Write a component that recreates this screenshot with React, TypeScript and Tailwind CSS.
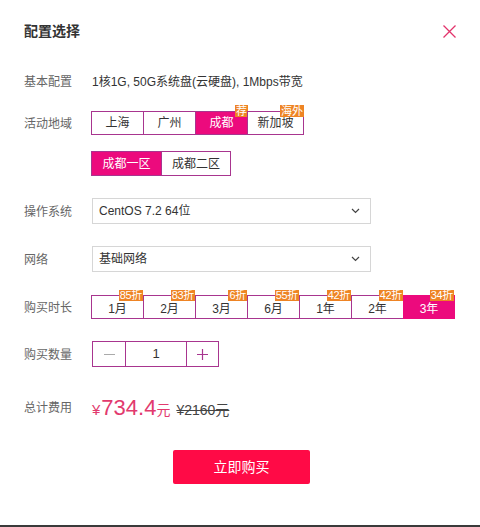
import { useState } from "react";

const regions = [
  { name: "上海", w: "w-[52px]" },
  { name: "广州", w: "w-[52px]" },
  { name: "成都", w: "w-[52px]", tag: "荐" },
  { name: "新加坡", w: "w-[57px]", tag: "海外" },
];

const zones = ["成都一区", "成都二区"];

const durations = [
  { name: "1月", off: "85折" },
  { name: "2月", off: "83折" },
  { name: "3月", off: "6折" },
  { name: "6月", off: "55折" },
  { name: "1年", off: "42折" },
  { name: "2年", off: "42折" },
  { name: "3年", off: "34折" },
];

function Chevron() {
  return (
    <svg width="9" height="6" viewBox="0 0 9 6" fill="none" aria-hidden="true">
      <path d="M1 1l3.5 3.5L8 1" stroke="#444" strokeWidth="1.2" />
    </svg>
  );
}

function Label({ children }: { children: React.ReactNode }) {
  return <span className="w-[68px] shrink-0 text-[12px] text-[#666] pt-px">{children}</span>;
}

export default function App() {
  const [region, setRegion] = useState(2);
  const [zone, setZone] = useState(0);
  const [dur, setDur] = useState(6);
  const [qty, setQty] = useState(1);

  return (
    <div
      className="h-[527px] flex flex-col bg-white text-[#333]"
      style={{ fontFamily: '"Liberation Sans", "Noto Sans CJK SC", sans-serif' }}
    >
      {/* Header */}
      <div className="flex items-center justify-between pl-6 pr-[24px] pt-[21px] h-[41px]">
        <h1 className="text-[14px] font-bold leading-5 text-[#333]">配置选择</h1>
        <svg width="13" height="13" viewBox="0 0 13 13" aria-hidden="true">
          <path d="M0.5 0.5l12 12M12.5 0.5l-12 12" stroke="#e2336b" strokeWidth="1.3" />
        </svg>
      </div>

      <div className="flex flex-col px-6">
        {/* Basic */}
        <div className="flex items-center h-6 mt-[28px]">
          <Label>基本配置</Label>
          <span className="text-[12px] text-[#333] pt-px">1核1G, 50G系统盘(云硬盘), 1Mbps带宽</span>
        </div>

        {/* Region */}
        <div className="flex items-center h-6 mt-[18px]">
          <Label>活动地域</Label>
          <div className="flex h-6 -ml-px">
            {regions.map((r, i) => (
              <button
                key={r.name}
                onClick={() => setRegion(i)}
                className={`relative ${r.w} h-6 border-y border-l border-[#a8358f] text-[12px] ${
                  i === regions.length - 1 ? "border-r" : ""
                } ${region === i ? "bg-[#ec0a7d] text-white" : "bg-white text-[#333]"}`}
              >
                {r.name}
                {r.tag && (
                  <span className="absolute right-[-1px] top-[-7px] h-[12px] px-px bg-[#ee8424] text-white text-[11px] leading-[12px]">
                    {r.tag}
                  </span>
                )}
              </button>
            ))}
          </div>
        </div>

        {/* Zone */}
        <div className="flex items-center h-[25px] mt-[16px]">
          <span className="w-[68px] shrink-0" />
          <div className="flex h-[25px] -ml-px">
            {zones.map((z, i) => (
              <button
                key={z}
                onClick={() => setZone(i)}
                className={`w-[70px] h-[25px] border-y border-l border-[#a8358f] text-[12px] ${
                  i === zones.length - 1 ? "border-r" : ""
                } ${zone === i ? "bg-[#ec0a7d] text-white" : "bg-white text-[#333]"}`}
              >
                {z}
              </button>
            ))}
          </div>
        </div>

        {/* OS */}
        <div className="flex items-center h-[26px] mt-[22px]">
          <Label>操作系统</Label>
          <div className="flex items-center justify-between w-[279px] h-[26px] border border-[#d6d6d6] pl-[6px] pr-[10px]">
            <span className="text-[12px] text-[#333]">CentOS 7.2 64位</span>
            <Chevron />
          </div>
        </div>

        {/* Network */}
        <div className="flex items-center h-[26px] mt-[22px]">
          <Label>网络</Label>
          <div className="flex items-center justify-between w-[279px] h-[26px] border border-[#d6d6d6] pl-[6px] pr-[10px]">
            <span className="text-[12px] text-[#333]">基础网络</span>
            <Chevron />
          </div>
        </div>

        {/* Duration */}
        <div className="flex items-center h-6 mt-[23px]">
          <Label>购买时长</Label>
          <div className="flex h-6 -ml-px">
            {durations.map((d, i) => (
              <button
                key={d.name}
                onClick={() => setDur(i)}
                className={`relative w-[52px] h-6 border-y border-l border-[#a8358f] text-[12px] leading-[26px] ${
                  i === durations.length - 1 ? "border-r" : ""
                } ${dur === i ? "bg-[#ec0a7d] text-white border-[#ec0a7d]" : "bg-white text-[#333]"}`}
              >
                {d.name}
                <span className="absolute right-0 top-[-6px] h-[11px] px-px bg-[#ee8424] text-white text-[11px] leading-[11px] tracking-[-0.3px]">
                  {d.off}
                </span>
              </button>
            ))}
          </div>
        </div>

        {/* Quantity */}
        <div className="flex items-center h-[26px] mt-[22px]">
          <Label>购买数量</Label>
          <div className="flex h-[26px] border border-[#a8358f]">
            <button
              onClick={() => setQty(Math.max(1, qty - 1))}
              className="w-[33px] flex items-center justify-center border-r border-[#a8358f]"
            >
              <span className="block w-[11px] h-px bg-[#aaa]" />
            </button>
            <div className="w-[60px] flex items-center justify-center text-[13px] text-[#333]">{qty}</div>
            <button
              onClick={() => setQty(qty + 1)}
              className="w-[32px] flex items-center justify-center border-l border-[#a8358f]"
            >
              <svg width="11" height="11" viewBox="0 0 11 11" aria-hidden="true">
                <path d="M5.5 0v11M0 5.5h11" stroke="#a8358f" strokeWidth="1.2" />
              </svg>
            </button>
          </div>
        </div>

        {/* Total */}
        <div className="flex items-center h-[28px] mt-[26px]">
          <Label>总计费用</Label>
          <div className="flex items-baseline pt-[2px]">
            <span className="text-[15px] text-[#e23a6e] mr-[1px]">¥</span>
            <span className="text-[22px] text-[#e23a6e] leading-7">734.4</span>
            <span className="text-[14px] text-[#e23a6e]">元</span>
            <span className="ml-[6px] text-[14px] text-[#444] line-through">¥2160元</span>
          </div>
        </div>

        {/* Buy */}
        <div className="flex justify-center mt-[29px] pl-[3px]">
          <button className="w-[137px] h-[34px] rounded-[2px] bg-[#ff0a46] text-white text-[14px]">立即购买</button>
        </div>
      </div>

      <div className="mt-auto h-[2px] bg-[#3a3a3a]" />
    </div>
  );
}
